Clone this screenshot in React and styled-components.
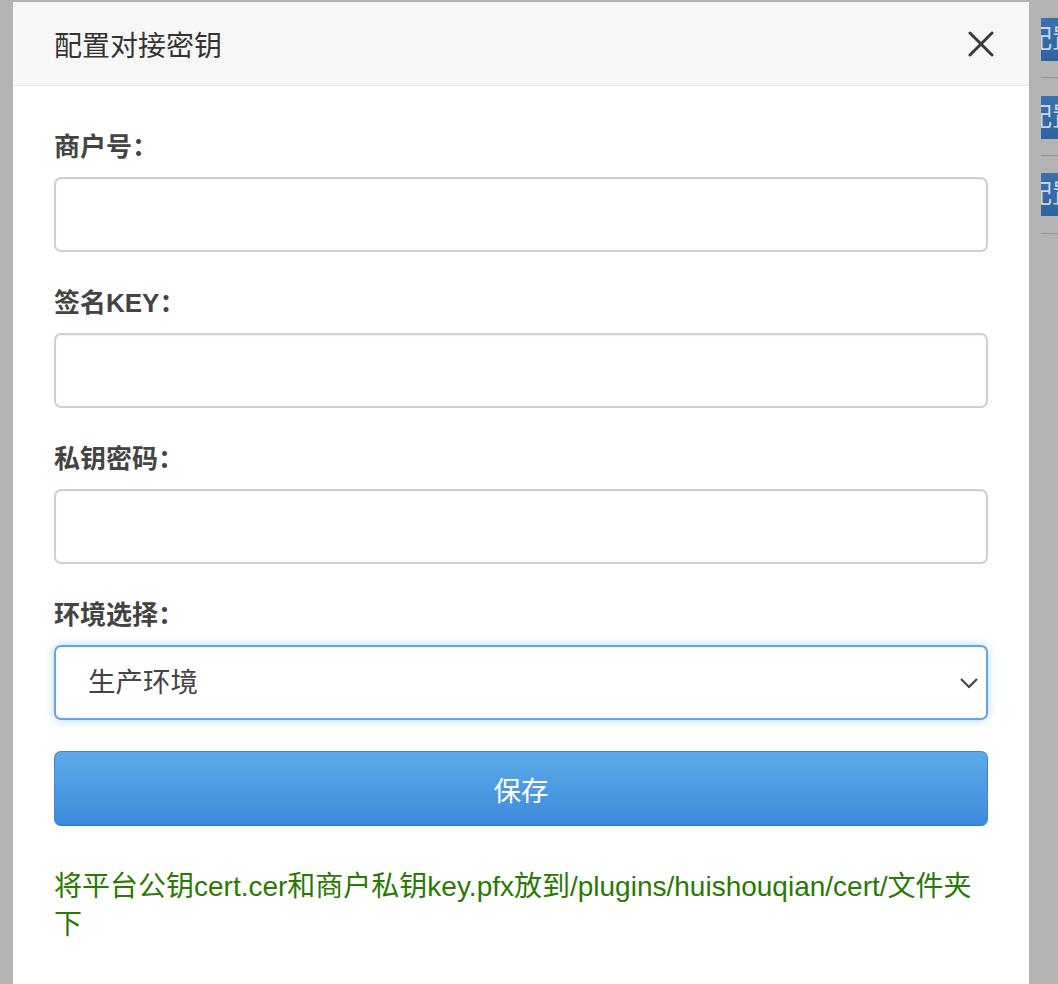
import React from 'react'
import styled, { createGlobalStyle } from 'styled-components'

const GlobalStyle = createGlobalStyle`
  html, body {
    margin: 0;
    padding: 0;
    height: 100%;
    overflow: hidden;
    background: #b3b3b3;
  }
  body {
    font-family: "Liberation Sans", "Noto Sans CJK SC", sans-serif;
  }
`

const Page = styled.div`
  display: flex;
  align-items: flex-start;
  height: 984px;
`

const Gutter = styled.div`
  width: 13px;
  flex: none;
`

const Modal = styled.div`
  width: 1016px;
  flex: none;
  margin-top: 2px;
  background: #fff;
  min-height: 990px;
`

const Header = styled.div`
  height: 83px;
  display: flex;
  align-items: center;
  justify-content: space-between;
  padding: 0 35px 0 41px;
  background: #f7f7f7;
  border-bottom: 1px solid #e5e5e5;
`

const Title = styled.h4`
  margin: 0;
  font-size: 28px;
  font-weight: normal;
  color: #333;
`

const Close = styled.button`
  border: 0;
  background: none;
  padding: 0;
  width: 26px;
  height: 26px;
  display: flex;
  cursor: pointer;
`

const Body = styled.div`
  padding: 41px 41px 40px;
`

const Group = styled.div`
  margin-bottom: 31px;
`

const Label = styled.label`
  display: block;
  font-size: 26px;
  font-weight: bold;
  line-height: 40px;
  color: #444;
  margin-bottom: 10px;
`

const Field = styled.input`
  display: block;
  box-sizing: border-box;
  width: 100%;
  height: 75px;
  border: 2px solid #d0d0d0;
  border-radius: 7px;
  box-shadow: inset 0 1px 2px rgba(0, 0, 0, 0.06);
  font-size: 27px;
  padding: 0 32px;
  font-family: inherit;
  outline: none;
`

const SelectWrap = styled.div`
  position: relative;
`

const Select = styled.select`
  display: block;
  box-sizing: border-box;
  width: 100%;
  height: 75px;
  appearance: none;
  background: #fff;
  border: 2px solid #66a3e4;
  border-radius: 7px;
  box-shadow: inset 0 1px 1px rgba(0, 0, 0, 0.06), 0 0 10px rgba(102, 163, 228, 0.45);
  font-size: 27.5px;
  color: #444;
  padding: 0 32px;
  font-family: inherit;
  outline: none;
`

const Chevron = styled.svg`
  position: absolute;
  right: 9px;
  top: 32px;
  pointer-events: none;
`

const SaveButton = styled.button`
  display: block;
  width: 100%;
  height: 75px;
  border: 1px solid #3b86d8;
  border-bottom-color: #2f78c6;
  border-radius: 7px;
  background: linear-gradient(to bottom, #5da9e9, #3d8bdd);
  color: #fff;
  font-size: 27.5px;
  font-family: inherit;
  cursor: pointer;
`

const Note = styled.p`
  margin: 42px 0 0;
  font-size: 28px;
  line-height: 38px;
  color: #2a7a02;
`

const Side = styled.div`
  flex: none;
  margin-left: 12px;
  width: 17px;
  overflow: hidden;
`

const SideRow = styled.div`
  height: 78px;
  box-sizing: border-box;
  padding-top: ${p => p.$top}px;
  border-bottom: 1px solid #979797;
`

const SideButton = styled.div`
  width: 40px;
  height: 43px;
  background: linear-gradient(to bottom, #3a70ad, #2e63a0);
  color: #c9d6e6;
  font-size: 26px;
  line-height: 43px;
  white-space: nowrap;
  text-indent: -15px;
`

export default function App() {
  return (
    <>
      <GlobalStyle />
      <Page>
        <Gutter />
        <Modal>
          <Header>
            <Title>配置对接密钥</Title>
            <Close aria-label="关闭">
              <svg width="26" height="26" viewBox="0 0 26 26">
                <path d="M2 2 L24 24 M24 2 L2 24" stroke="#3a3a3a" strokeWidth="3" strokeLinecap="round" />
              </svg>
            </Close>
          </Header>
          <Body>
            <Group>
              <Label>商户号：</Label>
              <Field type="text" />
            </Group>
            <Group>
              <Label>签名KEY：</Label>
              <Field type="text" />
            </Group>
            <Group>
              <Label>私钥密码：</Label>
              <Field type="text" />
            </Group>
            <Group>
              <Label>环境选择：</Label>
              <SelectWrap>
                <Select defaultValue="prod">
                  <option value="prod">生产环境</option>
                  <option value="test">测试环境</option>
                </Select>
                <Chevron width="20" height="12" viewBox="0 0 20 12">
                  <path d="M2 2 L10 10 L18 2" fill="none" stroke="#444" strokeWidth="2.2" />
                </Chevron>
              </SelectWrap>
            </Group>
            <SaveButton>保存</SaveButton>
            <Note>将平台公钥cert.cer和商户私钥key.pfx放到/plugins/huishouqian/cert/文件夹下</Note>
          </Body>
        </Modal>
        <Side>
          <SideRow $top={18}>
            <SideButton>配置</SideButton>
          </SideRow>
          <SideRow $top={18}>
            <SideButton>配置</SideButton>
          </SideRow>
          <SideRow $top={17}>
            <SideButton>配置</SideButton>
          </SideRow>
        </Side>
      </Page>
    </>
  )
}
